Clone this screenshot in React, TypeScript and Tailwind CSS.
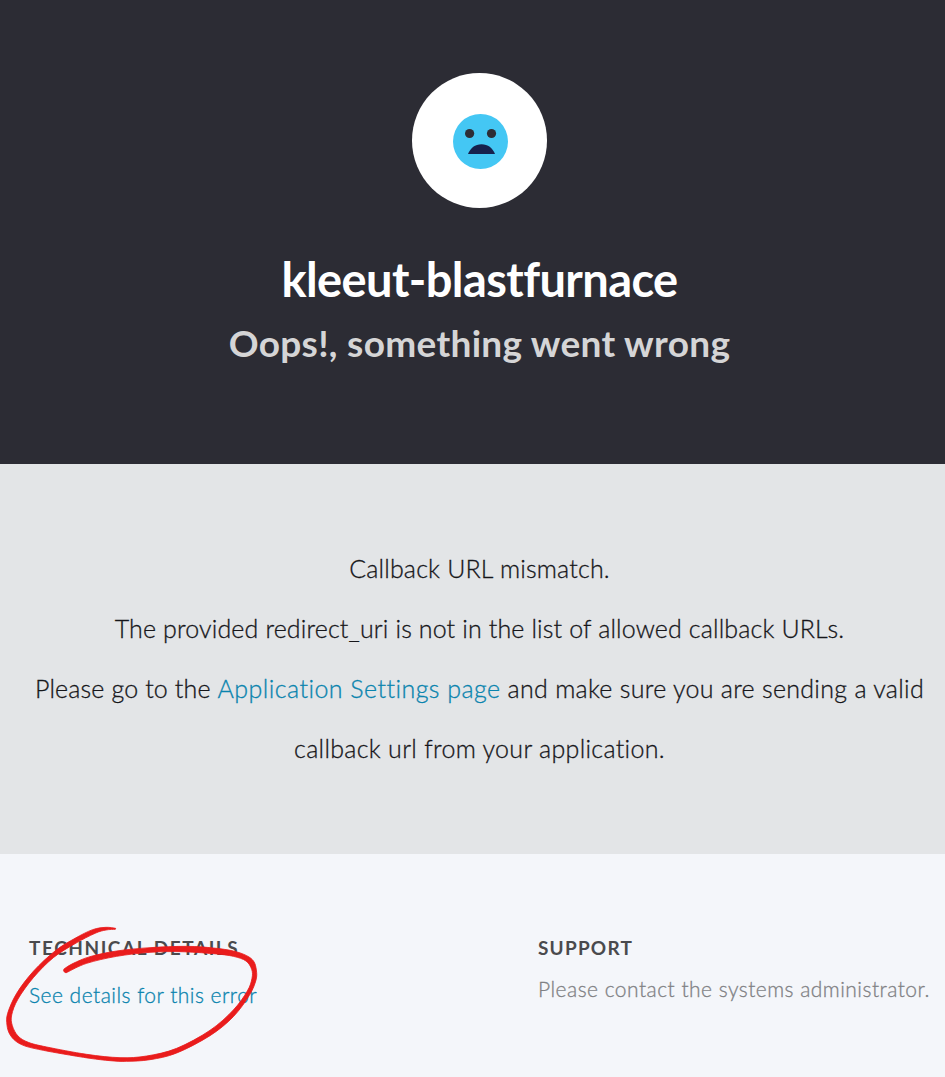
import React from "react";

type Point = [number, number];

const OUTER: Point[] = [
  [347, 55], [318, 52], [278, 59], [225, 85], [165, 123], [100, 184], [50, 250], [23, 310], [21, 345], [29, 372],
  [48, 394], [78, 409], [130, 421], [190, 432], [270, 445], [330, 452], [380, 454], [450, 449], [530, 429], [630, 377],
  [700, 320], [748, 256], [768, 210], [769, 180], [761, 154], [740, 137], [700, 123], [640, 114], [560, 109],
  [450, 113], [350, 123], [270, 140], [220, 160], [193, 176],
];

const INNER: Point[] = [
  [203, 186], [260, 160], [350, 139], [450, 127], [540, 125], [640, 131], [700, 139], [738, 153], [755, 178],
  [756, 205], [742, 243], [700, 300], [630, 361], [530, 415], [440, 438], [360, 443], [260, 433], [140, 411],
  [85, 397], [54, 378], [37, 347], [35, 315], [54, 267], [100, 203], [160, 143], [225, 101], [285, 70], [318, 60],
  [346, 58],
];

function smooth(points: Point[]): string {
  return points
    .slice(0, -1)
    .map((p, i) => {
      const before = points[Math.max(i - 1, 0)];
      const next = points[i + 1];
      const after = points[Math.min(i + 2, points.length - 1)];
      return `C${p[0] + (next[0] - before[0]) / 6} ${p[1] + (next[1] - before[1]) / 6} ${
        next[0] - (after[0] - p[0]) / 6
      } ${next[1] - (after[1] - p[1]) / 6} ${next[0]} ${next[1]}`;
    })
    .join("");
}

const LASSO = `M347 55${smooth(OUTER)}A7 7 0 0 0 203 186${smooth(INNER)}Z`;

function SadFace() {
  return (
    <svg viewBox="0 0 55 55" className="ml-[2px] mt-[2px] size-[55px]">
      <circle cx="27.5" cy="27.5" r="27.5" fill="#44c7f4" />
      <circle cx="16.6" cy="19.5" r="4.6" fill="#2d2d36" />
      <circle cx="38.5" cy="19.5" r="4.6" fill="#2d2d36" />
      <path d="M15 40C17.500 34 22 30.300 28.500 30.300S39.500 34 42 40Z" fill="#16214d" />
    </svg>
  );
}

export default function App() {
  return (
    <div className="flex h-[1077px] w-[945px] flex-col overflow-hidden bg-[#f4f6fa] font-['Lato','Open_Sans',sans-serif]">
      <header className="flex h-[464px] shrink-0 flex-col items-center bg-[#2c2c34] pl-[14px] pt-[73px] whitespace-nowrap">
        <div className="flex size-[135px] items-center justify-center rounded-full bg-white">
          <SadFace />
        </div>
        <h1 className="mt-[41px] text-[47px] leading-[60px] font-bold tracking-[-0.6px] text-white">kleeut-blastfurnace</h1>
        <h2 className="mt-[4px] text-[37px] leading-[60px] font-bold tracking-[0.3px] text-[#d5d5d6]">Oops!, something went wrong</h2>
      </header>
      <main className="flex h-[390px] shrink-0 flex-col items-center bg-[#e3e5e7] pl-[14px] pt-[74px] text-[25px] leading-[60px] font-light whitespace-nowrap text-[#16161a] [-webkit-text-stroke:0.3px_currentColor]">
        <p className="tracking-[0.18px]">Callback URL mismatch.</p>
        <p className="tracking-[0.14px]">The provided redirect_uri is not in the list of allowed callback URLs.</p>
        <p className="tracking-[0.29px]">
          <span className="tracking-[0.14px]">Please go to the </span>
          <a className="tracking-[0.45px] text-[#0a84ae]">Application Settings page</a> and make sure you are sending a valid
        </p>
        <p className="tracking-[0.3px]">callback url from your application.</p>
      </main>
      <footer className="relative grid h-[223px] shrink-0 grid-cols-[509px_1fr] bg-[#f4f6fa] pl-[29px] pt-[79px] whitespace-nowrap">
        <section>
          <h3 className="text-[19px] leading-[30px] font-bold tracking-[1.56px] text-[#4a4a4d]">TECHNICAL DETAILS</h3>
          <a className="mt-[17px] block text-[21px] leading-[30px] font-light tracking-[0.47px] text-[#0a84ae] [-webkit-text-stroke:0.3px_currentColor]">See details for this error</a>
        </section>
        <section>
          <h3 className="text-[19px] leading-[30px] font-bold tracking-[1.2px] text-[#4a4a4d]">SUPPORT</h3>
          <p className="mt-[11px] text-[21px] leading-[30px] font-light tracking-[0.47px] text-[#808184] [-webkit-text-stroke:0.3px_currentColor]">Please contact the systems administrator.</p>
        </section>
        <svg viewBox="0 0 840 501" className="pointer-events-none absolute top-[56px] left-0 h-[167px] w-[280px]">
          <path d={LASSO} fill="#e91c1c" stroke="#e91c1c" strokeWidth="2.5" strokeLinejoin="round" />
        </svg>
      </footer>
    </div>
  );
}
